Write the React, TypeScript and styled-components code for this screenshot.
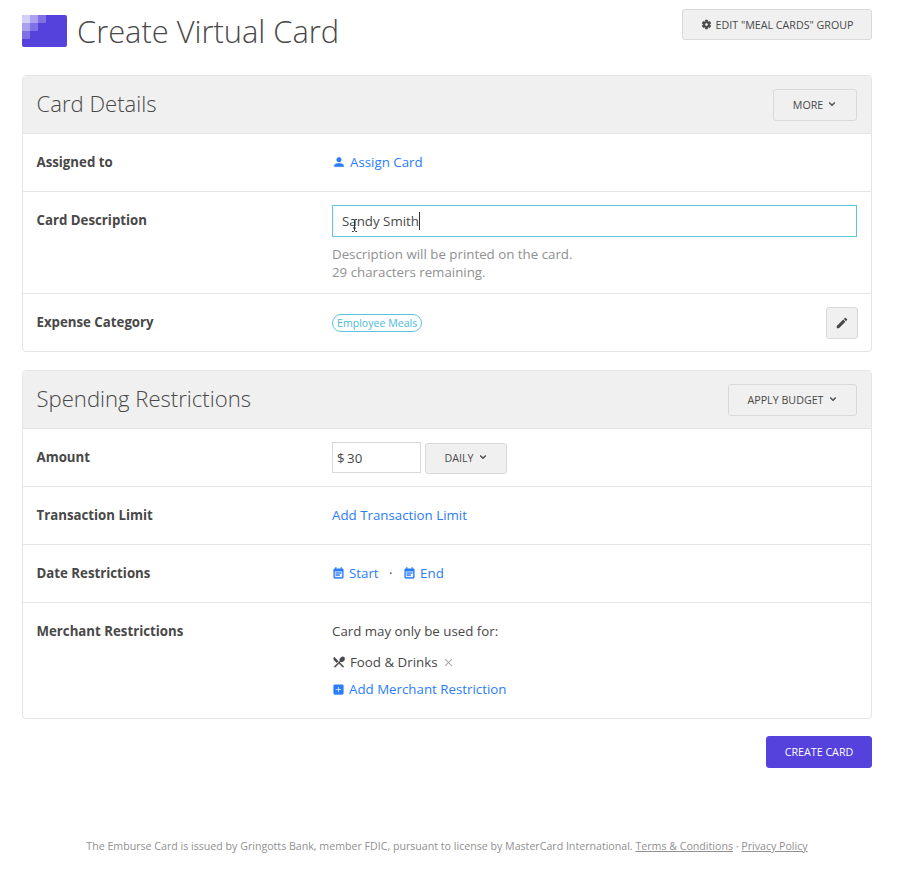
import React from "react";
import styled, { createGlobalStyle, css } from "styled-components";
import {
  MdAddBox,
  MdClose,
  MdEdit,
  MdEventNote,
  MdExpandMore,
  MdPerson,
  MdRestaurantMenu,
  MdSettings,
} from "react-icons/md";

const GlobalStyle = createGlobalStyle`
  *, *::before, *::after { box-sizing: border-box; }
  body {
    margin: 0;
    background: #fff;
    color: #484848;
    font-family: "Open Sans", sans-serif;
    font-size: 13.3px;
    line-height: 18px;
  }
  svg path[fill="none"] { stroke: none; }
`;

const Page = styled.main`
  width: 850px;
  margin-left: 22px;
`;

const PageHeader = styled.header`
  display: flex;
  align-items: flex-start;
  height: 75px;
  padding-top: 9px;
`;

const Logo = styled.svg`
  display: block;
  width: 45px;
  height: 32px;
  margin-top: 6px;
`;

const Title = styled.h1`
  flex: 1;
  margin: 0 0 0 10px;
  font-size: 30.85px;
  line-height: 44px;
  font-weight: 300;
`;

const Chevron = styled(MdExpandMore)`
  width: 12px;
  height: 12px;
  margin: -2px -1px 0 -1px;
  stroke: currentColor;
  stroke-width: 1px;
`;

const Button = styled.button<{ $width: number; $primary?: boolean; $height?: number }>`
  display: inline-flex;
  align-items: center;
  justify-content: center;
  flex: none;
  gap: 4px;
  width: ${(p) => p.$width}px;
  height: ${(p) => p.$height ?? 32}px;
  padding: 0;
  border: 1px solid #d9d9d9;
  border-radius: 3px;
  background: #f0f0f0;
  color: #484848;
  font: 400 10.7px/16px "Open Sans", sans-serif;
  white-space: nowrap;
  ${(p) =>
    p.$primary &&
    css`
      border-color: #5541dc;
      background: #5541dc;
      color: #fff;
    `}
`;

const Panel = styled.section`
  margin-bottom: 18px;
  border: 1px solid #e5e5e5;
  border-radius: 4px;
  overflow: hidden;
`;

const PanelHeader = styled.div`
  display: flex;
  align-items: center;
  justify-content: space-between;
  height: 57px;
  padding: 0 14px 0 13.5px;
  background: #f0f0f0;
`;

const PanelTitle = styled.h2`
  margin: -3px 0 0;
  font-size: 22.1px;
  line-height: 30px;
  font-weight: 300;
`;

const Row = styled.div<{ $height: number }>`
  display: grid;
  grid-template-columns: 295.5px 1fr auto;
  align-items: start;
  height: ${(p) => p.$height}px;
  padding: 0 13px 0 13.5px;
  border-top: 1px solid #e5e5e5;
`;

const Label = styled.div`
  padding-top: 19px;
  font-weight: 700;
  font-size: 13.25px;
`;

const Value = styled.div<{ $top?: number }>`
  padding-top: ${(p) => p.$top ?? 19}px;
`;

const Line = styled.div<{ $gap?: number; $top?: number }>`
  display: flex;
  align-items: center;
  gap: ${(p) => p.$gap ?? 4}px;
  margin-top: ${(p) => p.$top ?? 0}px;
  height: 18px;
`;

const Link = styled.a`
  display: inline-flex;
  align-items: center;
  gap: 4px;
  color: #2b7dfa;
  cursor: pointer;

  svg {
    stroke: currentColor;
    stroke-width: 0.7px;
  }
`;

const TextField = styled.div`
  position: relative;
  display: flex;
  align-items: center;
  width: 525px;
  height: 32px;
  padding-left: 9px;
  border: 1px solid #5bc5de;
  background: #fff;
`;

const Caret = styled.span`
  width: 1px;
  height: 18px;
  background: #333;
`;

const Pointer = styled.svg`
  position: absolute;
  left: 18px;
  top: 13px;
`;

const Hint = styled.p`
  margin: 8px 0 0;
  color: #909090;
`;

const Tag = styled.span`
  display: inline-flex;
  align-items: center;
  height: 18px;
  margin-top: 1px;
  padding: 0 4px;
  border: 1px solid #5bc5de;
  border-radius: 9px;
  color: #4bbcd8;
  font-size: 10.6px;
`;

const AmountField = styled.div`
  display: flex;
  align-items: center;
  width: 89px;
  height: 31px;
  margin-top: -1px;
  padding-left: 4px;
  border: 1px solid #d9d9d9;
  background: #fff;
  word-spacing: -1px;
`;

const Actions = styled.div`
  display: flex;
  justify-content: flex-end;
  margin-top: -1px;
`;

const Footer = styled.footer`
  margin-top: 69px;
  color: #909090;
  font-size: 10.64px;
  text-align: center;
  white-space: nowrap;

  a {
    color: inherit;
    text-decoration: underline;
  }
`;

const squares = [
  [0, 0, 0.75],
  [1, 0, 0.5],
  [0, 1, 0.5],
  [2, 0, 0.25],
  [1, 1, 0.25],
  [0, 2, 0.25],
];

export default function App() {
  return (
    <>
      <GlobalStyle />
      <Page>
        <PageHeader>
          <Logo viewBox="0 0 45 32">
            <defs>
              <clipPath id="logo">
                <rect width="45" height="32" rx="2" />
              </clipPath>
            </defs>
            <g clipPath="url(#logo)">
              <rect width="45" height="32" fill="#5541dc" />
              {squares.map(([x, y, o]) => (
                <rect key={`${x}-${y}`} x={x * 8} y={y * 8} width="8" height="8" fill="#fff" opacity={o} />
              ))}
            </g>
          </Logo>
          <Title>Create Virtual Card</Title>
          <Button $width={190} $height={31}>
            <MdSettings size={11} stroke="currentColor" strokeWidth={1.5} /> EDIT "MEAL CARDS" GROUP
          </Button>
        </PageHeader>

        <Panel>
          <PanelHeader>
            <PanelTitle>Card Details</PanelTitle>
            <Button $width={84}>
              MORE <Chevron />
            </Button>
          </PanelHeader>
          <Row $height={58}>
            <Label>Assigned to</Label>
            <Value>
              <Line>
                <Link>
                  <MdPerson size={14} /> Assign Card
                </Link>
              </Line>
            </Value>
          </Row>
          <Row $height={102}>
            <Label>Card Description</Label>
            <Value $top={13}>
              <TextField>
                Sandy Smith
                <Caret />
                <Pointer width="7" height="13" viewBox="0 0 7 13" fill="none">
                  <path
                    d="M1 .5h1.5l1 1 1-1H6M3.5 1.5v10M1 12.5h1.5l1-1 1 1H6M2 9h3"
                    stroke="#333"
                    strokeWidth="1"
                  />
                </Pointer>
              </TextField>
              <Hint>
                Description will be printed on the card.
                <br />
                29 characters remaining.
              </Hint>
            </Value>
          </Row>
          <Row $height={58}>
            <Label>Expense Category</Label>
            <Value>
              <Line>
                <Tag>Employee Meals</Tag>
              </Line>
            </Value>
            <Value $top={13}>
              <Button $width={32}>
                <MdEdit size={14} />
              </Button>
            </Value>
          </Row>
        </Panel>

        <Panel>
          <PanelHeader>
            <PanelTitle>Spending Restrictions</PanelTitle>
            <Button $width={129}>
              APPLY BUDGET <Chevron />
            </Button>
          </PanelHeader>
          <Row $height={58}>
            <Label>Amount</Label>
            <Value $top={13}>
              <Line $top={7}>
                <AmountField>$ 30</AmountField>
                <Button $width={82} $height={31}>
                  DAILY <Chevron />
                </Button>
              </Line>
            </Value>
          </Row>
          <Row $height={58}>
            <Label>Transaction Limit</Label>
            <Value>
              <Link>Add Transaction Limit</Link>
            </Value>
          </Row>
          <Row $height={58}>
            <Label>Date Restrictions</Label>
            <Value>
              <Line $gap={10.5}>
                <Link>
                  <MdEventNote size={13} /> Start
                </Link>
                <span>·</span>
                <Link>
                  <MdEventNote size={13} /> End
                </Link>
              </Line>
            </Value>
          </Row>
          <Row $height={116}>
            <Label>Merchant Restrictions</Label>
            <Value>
              <Line>Card may only be used for:</Line>
              <Line $top={13}>
                <MdRestaurantMenu size={14} stroke="currentColor" strokeWidth={0.7} /> Food &amp; Drinks{" "}
                <MdClose size={13} color="#aaa" />
              </Line>
              <Line $top={9}>
                <Link>
                  <MdAddBox size={13} /> Add Merchant Restriction
                </Link>
              </Line>
            </Value>
          </Row>
        </Panel>

        <Actions>
          <Button $width={106} $primary>
            CREATE CARD
          </Button>
        </Actions>
        <Footer>
          The Emburse Card is issued by Gringotts Bank, member FDIC, pursuant to license by MasterCard
          International. <a>Terms &amp; Conditions</a> · <a>Privacy Policy</a>
        </Footer>
      </Page>
    </>
  );
}
